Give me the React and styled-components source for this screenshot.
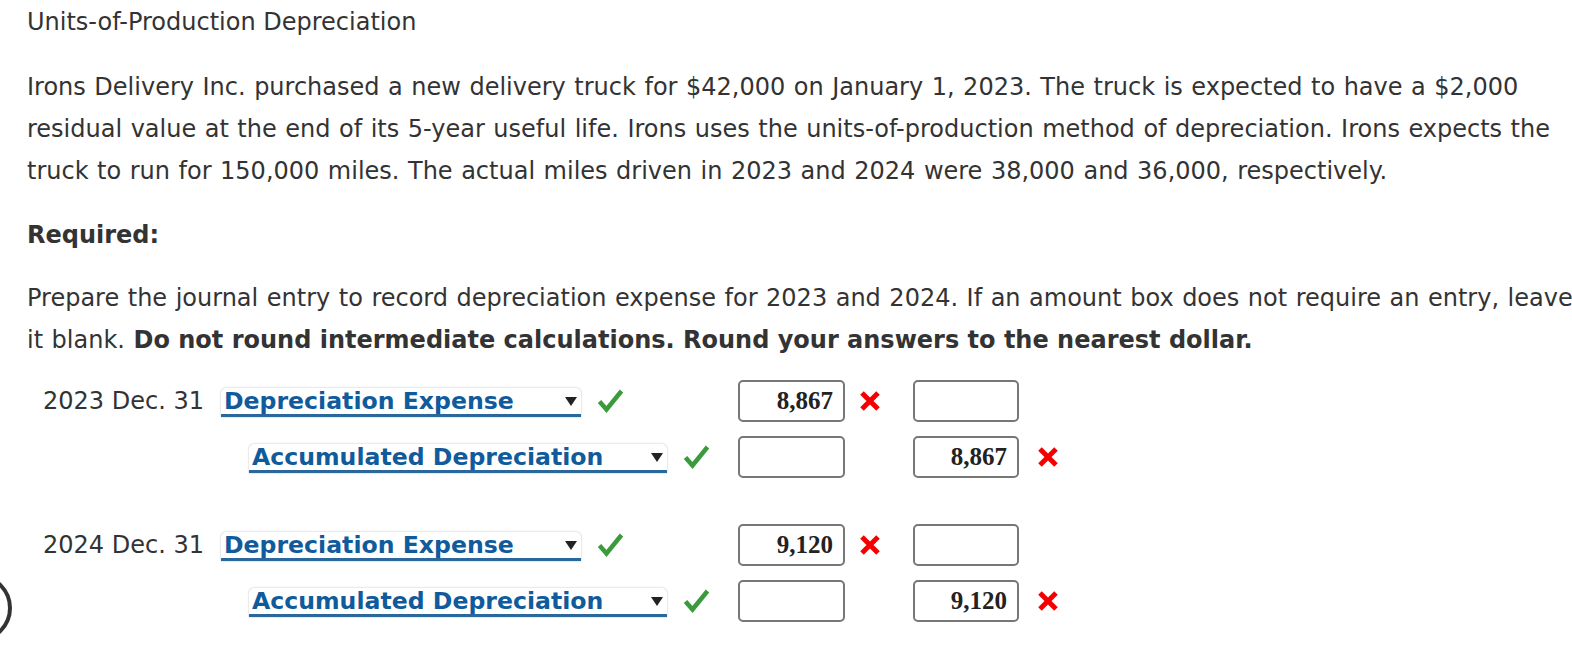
import React from "react";
import styled, { createGlobalStyle } from "styled-components";

const GlobalStyle = createGlobalStyle`
  html, body {
    margin: 0;
    padding: 0;
    background: #fff;
  }
  body {
    font-family: "DejaVu Sans", Verdana, sans-serif;
    color: #333;
    overflow: hidden;
  }
`;

const Page = styled.div`
  position: relative;
  width: 1572px;
  height: 646px;
  padding-left: 27px;
  box-sizing: border-box;
  overflow: hidden;
`;

const Title = styled.div`
  font-size: 24px;
  line-height: 44px;
  white-space: nowrap;
`;

const Para = styled.p`
  margin: ${(p) => p.$top}px 0 0;
  font-size: 24px;
  line-height: 42px;
  white-space: nowrap;
  word-spacing: 0.9px;
  font-weight: ${(p) => (p.$bold ? "bold" : "normal")};

  b {
    word-spacing: 0;
  }
`;

const Entries = styled.div`
  margin-top: 12px;
  padding-left: 16px;
`;

const Group = styled.div`
  & + & {
    margin-top: 32px;
  }
`;

const Row = styled.div`
  display: flex;
  align-items: center;
  height: 56px;
`;

const DateCell = styled.div`
  width: 178px;
  flex: none;
  font-size: 24px;
  white-space: nowrap;
`;

const AccountCell = styled.div`
  width: 517px;
  flex: none;
  display: flex;
  align-items: center;
  padding-left: ${(p) => (p.$indent ? 28 : 0)}px;
  box-sizing: border-box;
`;

const Select = styled.div`
  width: ${(p) => p.$width}px;
  height: 29px;
  box-sizing: border-box;
  display: flex;
  align-items: center;
  justify-content: space-between;
  padding: 2px 3px 0 3px;
  background: #fff;
  border-radius: 5px 5px 0 0;
  box-shadow: 0 0 2px rgba(0, 0, 0, 0.3);
  border-bottom: 3px solid #2a679d;
  color: #0f5b9c;
  font-weight: bold;
  font-size: 23.6px;
  line-height: 1;
  white-space: nowrap;
  margin-top: 2px;
`;

const Caret = styled.span`
  width: 0;
  height: 0;
  border-left: 6.5px solid transparent;
  border-right: 6.5px solid transparent;
  border-top: 9px solid #222;
  margin-right: 1px;
`;

const CheckWrap = styled.span`
  display: inline-flex;
  margin-left: 16px;
`;

const Amount = styled.div`
  width: ${(p) => p.$width}px;
  height: 42px;
  flex: none;
  box-sizing: border-box;
  border: 2px solid #777;
  border-radius: 5px;
  display: flex;
  align-items: center;
  justify-content: flex-end;
  padding-right: 10px;
  font-family: "Liberation Serif", "Times New Roman", serif;
  font-weight: bold;
  font-size: 25px;
  color: #222;
`;

const MarkCell = styled.div`
  width: ${(p) => p.$width}px;
  flex: none;
  display: flex;
  align-items: center;
  padding-left: ${(p) => p.$pad}px;
  box-sizing: border-box;
`;

const Circle = styled.svg`
  position: absolute;
  left: 0;
  top: 570px;
`;

const Check = () => (
  <svg width="27" height="26" viewBox="0 0 27 26">
    <path
      d="M2.5 13.5 L9.5 21.5 L24.5 3"
      fill="none"
      stroke="#3a9b3d"
      strokeWidth="4.5"
      strokeLinejoin="miter"
    />
  </svg>
);

const Cross = () => (
  <svg width="22" height="22" viewBox="0 0 22 22">
    <path
      d="M3 3 L19 19 M19 3 L3 19"
      stroke="#f40000"
      strokeWidth="5"
      strokeLinecap="butt"
    />
  </svg>
);

const entries = [
  { date: "2023 Dec. 31", debit: "8,867", credit: "8,867" },
  { date: "2024 Dec. 31", debit: "9,120", credit: "9,120" },
];

const App = () => {
  return (
    <>
      <GlobalStyle />
      <Page>
        <Title>Units-of-Production Depreciation</Title>
        <Para $top={22}>
          Irons Delivery Inc. purchased a new delivery truck for $42,000 on January 1, 2023. The
          truck is expected to have a $2,000
          <br />
          residual value at the end of its 5-year useful life. Irons uses the units-of-production
          method of depreciation. Irons expects the
          <br />
          truck to run for 150,000 miles. The actual miles driven in 2023 and 2024 were 38,000 and
          36,000, respectively.
        </Para>
        <Para $top={22} $bold>
          Required:
        </Para>
        <Para $top={21}>
          Prepare the journal entry to record depreciation expense for 2023 and 2024. If an amount
          box does not require an entry, leave
          <br />
          it blank.{" "}
          <b>Do not round intermediate calculations. Round your answers to the nearest dollar.</b>
        </Para>

        <Entries>
          {entries.map((e) => (
            <Group key={e.date}>
              <Row>
                <DateCell>{e.date}</DateCell>
                <AccountCell>
                  <Select $width={360}>
                    Depreciation Expense
                    <Caret />
                  </Select>
                  <CheckWrap>
                    <Check />
                  </CheckWrap>
                </AccountCell>
                <Amount $width={107}>{e.debit}</Amount>
                <MarkCell $width={68} $pad={14}>
                  <Cross />
                </MarkCell>
                <Amount $width={106} />
              </Row>
              <Row>
                <DateCell />
                <AccountCell $indent>
                  <Select $width={418}>
                    Accumulated Depreciation
                    <Caret />
                  </Select>
                  <CheckWrap>
                    <Check />
                  </CheckWrap>
                </AccountCell>
                <Amount $width={107} />
                <MarkCell $width={68} />
                <Amount $width={106}>{e.credit}</Amount>
                <MarkCell $width={60} $pad={18}>
                  <Cross />
                </MarkCell>
              </Row>
            </Group>
          ))}
        </Entries>

        <Circle width="16" height="76" viewBox="0 0 16 76">
          <circle cx="-22" cy="38" r="32" fill="none" stroke="#333" strokeWidth="4" />
        </Circle>
      </Page>
    </>
  );
};

export default App;
